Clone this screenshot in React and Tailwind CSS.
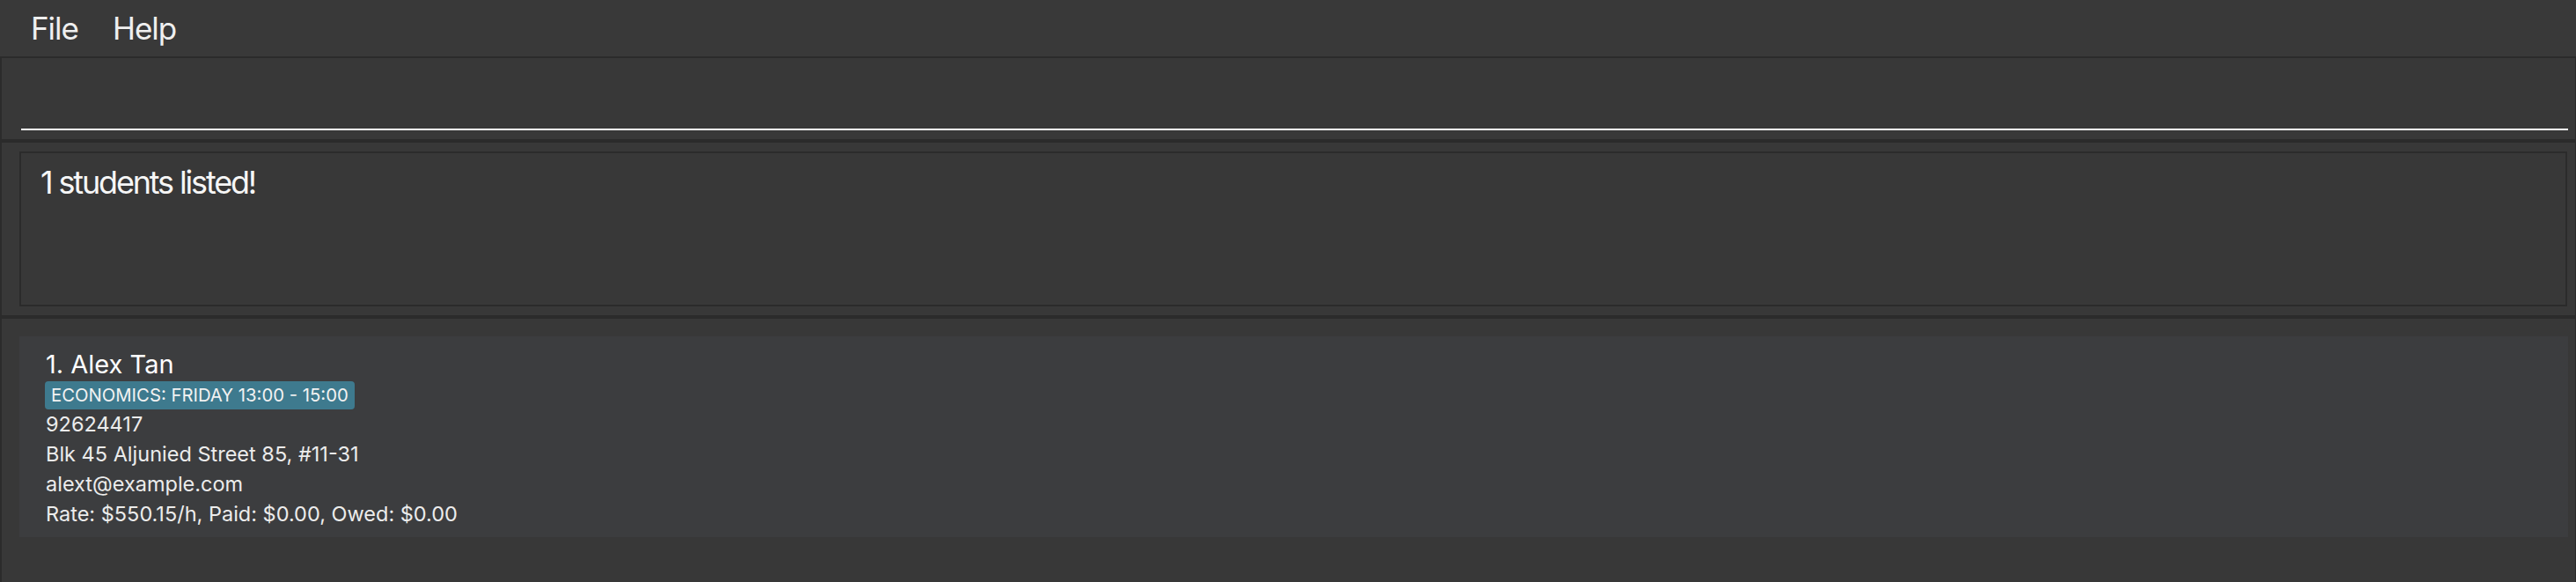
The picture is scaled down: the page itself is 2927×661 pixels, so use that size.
import React from 'react';

const student = {
  index: 1,
  name: 'Alex Tan',
  tags: ['ECONOMICS: FRIDAY 13:00 - 15:00'],
  phone: '92624417',
  address: 'Blk 45 Aljunied Street 85, #11-31',
  email: 'alext@example.com',
  rate: 'Rate: $550.15/h, Paid: $0.00, Owed: $0.00',
};

function MenuBar() {
  return (
    <div className="h-[66px] shrink-0 bg-[#393939] border-b-2 border-[#2b2b2b] flex items-center pl-[35px] text-[35px] tracking-[-0.03em] text-[#efefef]">
      <span className="w-[93px]">File</span>
      <span>Help</span>
    </div>
  );
}

function CommandBox() {
  return (
    <div className="h-[92px] shrink-0 pl-[22px] pr-[8px] pb-[10px] flex items-end">
      <div className="w-full border-b-2 border-white" />
    </div>
  );
}

function ResultDisplay() {
  return (
    <div className="shrink-0 pl-[20px] pr-[9px] pt-[10px] pb-[10px]">
      <div className="h-[176px] border-2 border-[#2b2b2b] px-[22px] pt-[15px] text-[36px] leading-[36px] tracking-[-0.06em] text-[#f6f6f6]">
        1 students listed!
      </div>
    </div>
  );
}

function StudentCard({ s }) {
  return (
    <div className="h-[228px] bg-[#3c3d3f] pl-[30px] pt-[14px] flex flex-col text-[#ececec]">
      <div className="text-[29px] leading-[36px] text-white">
        {s.index}. {s.name}
      </div>
      <div className="flex gap-2 mt-[1px]">
        {s.tags.map((t) => (
          <span
            key={t}
            className="h-[32px] -ml-[1px] px-[7px] rounded-[4px] bg-[#3e7a8e] text-[20.3px] leading-[32px] text-[#f2f2f2]"
          >
            {t}
          </span>
        ))}
      </div>
      <div className="text-[23.5px] leading-[34px]">
        <div>{s.phone}</div>
        <div>{s.address}</div>
        <div>{s.email}</div>
        <div>{s.rate}</div>
      </div>
    </div>
  );
}

export default function App() {
  return (
    <div className="w-[2927px] h-[661px] overflow-hidden bg-[#383838] flex flex-col font-['Inter',sans-serif]">
      <MenuBar />
      <div className="flex-1 flex flex-col border-l-2 border-r border-[#2b2b2b]">
        <CommandBox />
        <div className="h-[4px] shrink-0 bg-[#2b2b2b]" />
        <ResultDisplay />
        <div className="h-[4px] shrink-0 bg-[#2b2b2b]" />
        <div className="flex-1 pl-[20px] pr-[8px] pt-[20px]">
          <StudentCard s={student} />
        </div>
      </div>
    </div>
  );
}
